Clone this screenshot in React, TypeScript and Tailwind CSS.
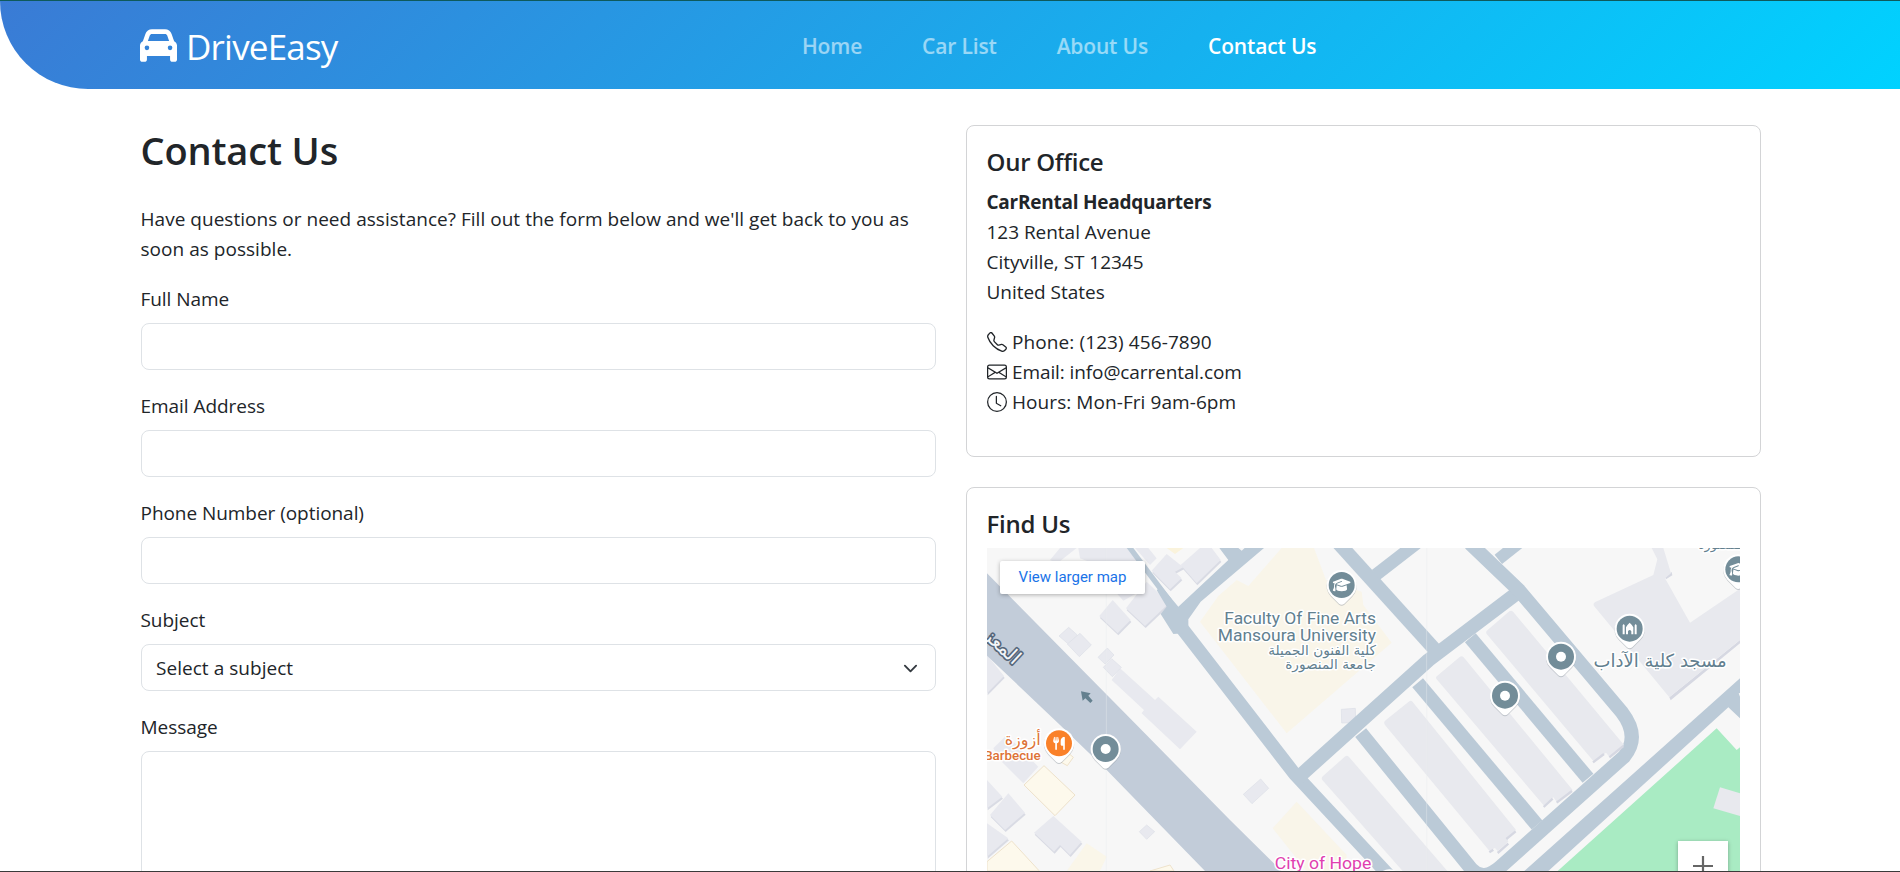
import type { ReactNode } from "react";
import { BsClock, BsEnvelope, BsTelephone } from "react-icons/bs";
import { FaCar, FaGraduationCap, FaUtensils } from "react-icons/fa6";

const inputClass =
  "block h-[47px] w-full rounded-[8px] border border-[#dee2e6] bg-white px-[14px] text-[19px] outline-none";

function Field({ label, children }: { label: string; children: ReactNode }) {
  return (
    <div className="mb-5">
      <label className="-ml-[0.5px] mb-[9px] block pt-px text-[19px] leading-[30px] tracking-[-0.05px] whitespace-nowrap">
        {label}
      </label>
      {children}
    </div>
  );
}

function Header() {
  const links = ["Home", "Car List", "About Us"];
  return (
    <header className="bg-white">
      <div className="h-px bg-[#0e5a5c]" />
      <div className="h-[88px] rounded-bl-[88px] bg-linear-[135deg,#3a7bd5,#00d2ff]">
        <div className="mx-auto flex h-full w-[1620px] items-center pt-[2px] text-white">
          <div className="flex w-[662px] items-center gap-[9px]">
            <FaCar className="mt-[-2px] size-[37px]" />
            <span className="text-[35px] leading-none tracking-[-0.8px]">DriveEasy</span>
          </div>
          <nav className="flex items-center gap-[60px] pt-[2px] text-[21px] font-semibold tracking-[-0.16px] whitespace-nowrap">
            {links.map((l) => (
              <a key={l} href="#" className="text-white/55">
                {l}
              </a>
            ))}
            <a href="#" className="text-white">
              Contact Us
            </a>
          </nav>
        </div>
      </div>
    </header>
  );
}

function Pin({ x, y, color = "#738d99", children }: { x: number; y: number; color?: string; children?: ReactNode }) {
  const body = "M0 -45A45 45 0 0 1 32 32L8 56Q0 62 -8 56L-32 32A45 45 0 0 1 0 -45Z";
  return (
    <g transform={`translate(${x} ${y})`}>
      <path d={body} transform="translate(0 3)" fill="#8a939b" opacity="0.45" />
      <path d={body} fill="#fff" />
      <circle r="39" fill={color} />
      {children ?? <circle r="15" fill="#fff" />}
    </g>
  );
}

function MapDrawing() {
  const building = { fill: "#e8e9ef", stroke: "#dddfe7", strokeWidth: 2 };
  return (
    <svg viewBox="51 204 2259 969" className="block h-[323px] w-[753px]" aria-hidden="true">
      <rect x="51" y="204" width="2259" height="969" fill="#f7f7f7" />

      {/* campus ground and parks */}
      <path d="M935 204H1032L1068 300L1175 335L1180 375L1265 488L950 760L690 425L745 348L800 300L835 318Z" fill="#f9f5e9" />
      <path d="M980 965L1130 1125V1173H1010L908 1045Z" fill="#f9f5e9" />
      <path d="M590 204H640L615 222Z" fill="#faf3dc" />
      <path d="M350 1090L410 1130L390 1173H290Z" fill="#faf6e9" />
      <path d="M2240 745L2300 810L2310 802V1173H1763Z" fill="#a9ebc3" />
      <path d="M2250 922L2310 940V1008L2230 985Z" fill="#e8e9ee" />

      {/* shaded building edges */}
      <g fill="#d9dbe4" transform="translate(2 6)">
        <path d="M590 222L640 262L615 275L635 295L600 328L545 272Z" />
        <path d="M690 204H725L752 240L680 310L632 255Z" />
        <path d="M530 305L597 370L525 438L468 385Z" />
        <path d="M428 360L482 420L443 460L388 408Z" />
        <path d="M51 525L102 588L51 640Z" />
        <path d="M250 1008L335 1085L300 1125L270 1095L252 1115L192 1058Z" />
        <path d="M115 940L165 998L105 1050L60 1005Z" />
        <path d="M51 900L97 950L51 985Z" />
        <path d="M51 1030L115 1075L51 1130Z" />
      </g>
      <g fill="#e8e9ef">
        <path d="M270 204H320L262 250L240 240Z" />
        <path d="M325 204H470L520 260L420 270L330 235Z" />
        <path d="M495 204H535L560 235L540 255Z" />
        <path d="M590 222L640 262L615 275L635 295L600 328L545 272Z" />
        <path d="M690 204H725L752 240L680 310L632 255Z" />
        <path d="M530 305L597 370L525 438L468 385Z" />
        <path d="M428 360L482 420L443 460L388 408Z" />
        <path d="M440 340H500L460 362Z" />
        <path d="M450 565L555 660L565 650L680 755L630 808L515 700L522 690L425 600Z" />
        <path d="M51 525L102 588L51 640Z" />
        <path d="M250 1008L335 1085L300 1125L270 1095L252 1115L192 1058Z" />
        <path d="M115 940L165 998L105 1050L60 1005Z" />
        <path d="M51 900L97 950L51 985Z" />
        <path d="M51 1030L115 1075L51 1130Z" />
        <path d="M110 765L205 860L160 910L90 840L70 805Z" />
      </g>
      <g {...building}>
        <path d="M296 442L322 465L295 492L267 468Z" />
        <path d="M330 460L364 495L328 530L292 492Z" />
        <path d="M412 504L432 525L405 552L384 532Z" />
        <path d="M425 536L454 562L427 590L400 562Z" />
        <path d="M872 897L896 925L846 971L820 943Z" />
        <path d="M530 1035L554 1055L530 1078L508 1055Z" />
        <path d="M1114 688L1156 685L1157 728L1115 729Z" />
      </g>
      <g fill="#fdf9ec" stroke="#eee2cb" strokeWidth="3">
        <path d="M222 857L315 945L255 1007L162 915Z" />
        <path d="M125 1083L208 1173H51V1145Z" />
        <path d="M290 815L310 832L292 857L272 846Z" />
        <path d="M540 1173L600 1155L612 1173Z" />
      </g>

      {/* mosque block */}
      <path d="M2098 652L2312 478V488L2102 661ZM2085 290L2105 276L2107 286L2088 298Z" fill="#d6d8e2" />
      <path d="M2045 204L2062 238L2050 285L1876 366Q1868 370 1872 378L2098 652L2312 478V325L2160 428L2085 295L2103 280L2080 204Z" fill="#e8e9ee" />

      {/* avenue */}
      <path d="M51 280L500 735L780 1020L935 1173H705L410 870L270 735L51 527Z" fill="#c2ccd9" />

      {/* streets */}
      <g fill="none" stroke="#bbcad7" strokeWidth="42" strokeLinejoin="round">
        <path d="M474 196L600 364" strokeWidth="16" />
        <path d="M632 440L974 882L1265 1195" strokeWidth="40" />
        <path d="M1106 190L1394 508" />
        <path d="M1217 285L1340 190" strokeWidth="38" />
        <path d="M985 892L1376 540L1640 340" />
        <path d="M1500 190L1648 332L1955 696Q2012 770 1962 830L1590 1162Q1540 1205 1505 1168L1172 758" />
        <path d="M1585 238L1648 188" strokeWidth="36" />
        <path d="M1501 473L1854 895" />
        <path d="M1343 608L1701 1035" />
      </g>
      <path d="M625 380L775 240L748 204H805L815 212L824 204H882L692 365L655 418V440L640 460L610 462L572 402L590 380L560 330L575 320Z" fill="#bbcad7" />
      <path d="M2310 595V715L2275 682L1735 1173H1663Z" fill="#bbcad7" />
      <path d="M2306 640L2312 638V655Z" fill="#f7f7f7" />

      {/* dormitory rows */}
      <g fill="#e8e9ee" transform="translate(1170 0)">
        <path d="M380 462Q376 456 382 451L448 394Q454 390 460 396L792 795L748 830L738 818L700 843Z" />
        <path d="M230 598Q225 592 232 587L300 530Q306 526 311 532L638 930L590 965L580 952L552 977Z" />
        <path d="M75 735Q69 727 77 721L148 664Q153 660 158 666L468 1050L440 1073L445 1085L413 1113L405 1104L388 1112Z" />
        <path d="M-113 900Q-118 893 -110 887L-44 829Q-39 825 -33 831L262 1173H128Z" />
      </g>
      <g fill="none" stroke="#d6d8e2" strokeWidth="7" transform="translate(1170 2)">
        <path d="M790 796L748 830M732 820L699 845" />
        <path d="M636 931L590 966M578 954L551 979" />
        <path d="M467 1052L439 1075M445 1089L413 1117M400 1107L388 1115" />
      </g>

      {/* tile seams */}
      <path d="M409 204V1173M1370 204V1173" stroke="#eceef0" strokeWidth="2" opacity="0.6" />

      {/* direction arrow */}
      <path d="M333 634L362 640L355 647L368 662L361 669L346 655L338 662Z" fill="#64808f" />

      {/* labels */}
      <g fontFamily="Roboto, sans-serif" fill="#62808f" stroke="#fff" strokeWidth="9" strokeLinejoin="round" paintOrder="stroke">
        <text x="1218" y="431" fontSize="50" textAnchor="end" textLength="455" lengthAdjust="spacingAndGlyphs">
          Faculty Of Fine Arts
        </text>
        <text x="1218" y="484" fontSize="50" textAnchor="end" textLength="475" lengthAdjust="spacingAndGlyphs">
          Mansoura University
        </text>
        <g fontFamily="'DejaVu Sans', sans-serif" direction="rtl">
          <text x="1218" y="526" fontSize="41" textAnchor="start">كلية الفنون الجميلة</text>
          <text x="1218" y="568" fontSize="41" textAnchor="start">جامعة المنصورة</text>
          <text x="2270" y="562" fontSize="54" textAnchor="start">مسجد كلية الآداب</text>
          <text x="2330" y="208" fontSize="38" textAnchor="start">المنصورة</text>
          <text x="212" y="795" fontSize="48" textAnchor="start" fill="#dd7236">أزوزة</text>
        </g>
        <text x="212" y="839" fontSize="40" fontWeight="500" textAnchor="end" fill="#dd7236">Barbecue</text>
        <text x="914" y="1167" fontSize="50" fill="#e040b0" textLength="290" lengthAdjust="spacingAndGlyphs">
          City of Hope
        </text>
      </g>
      <text
        transform="translate(130 556) rotate(43)"
        direction="rtl"
        fontFamily="'DejaVu Sans', sans-serif"
        fontSize="58"
        fill="#f4f6f8"
        stroke="#56677b"
        strokeWidth="10"
        strokeLinejoin="round"
        paintOrder="stroke"
      >
        المعز
      </text>

      {/* pins */}
      <Pin x={1115} y={315}>
        <FaGraduationCap x="-27" y="-27" size="54" color="#fff" />
      </Pin>
      <Pin x={267} y={790} color="#fa8129">
        <FaUtensils x="-20" y="-20" size="40" color="#fff" />
      </Pin>
      <Pin x={407} y={807} />
      <Pin x={1773} y={530} />
      <Pin x={1605} y={647} />
      <Pin x={1979} y={446}>
        <path d="M-21 17V-10L-18 -14L-15 -10V17ZM21 17V-10L18 -14L15 -10V17ZM-11 17V-4Q-9 -10 0 -18Q9 -10 11 -4V17H5V8Q0 0 -5 8V17Z" fill="#fff" />
      </Pin>
      <Pin x={2305} y={268}>
        <FaGraduationCap x="-27" y="-27" size="54" color="#fff" />
      </Pin>
      <circle cx="1258" cy="1208" r="36" fill="#e040b0" stroke="#fff" strokeWidth="8" />
    </svg>
  );
}

function ContactForm() {
  return (
    <section className="w-[795px]">
      <h1 className="mb-[29px] -ml-[0.5px] pt-px text-[38px] leading-[48px] font-semibold tracking-[-0.15px]">Contact Us</h1>
      <p className="mb-[19px] -ml-[0.5px] pt-px text-[19px] leading-[30px] tracking-[0.03px] whitespace-nowrap">
        Have questions or need assistance? Fill out the form below and we'll get back to you as
        <br />
        soon as possible.
      </p>
      <Field label="Full Name">
        <input className={inputClass} />
      </Field>
      <Field label="Email Address">
        <input className={inputClass} />
      </Field>
      <Field label="Phone Number (optional)">
        <input className={inputClass} />
      </Field>
      <Field label="Subject">
        <button className="flex h-[47px] w-full items-center justify-between rounded-[8px] border border-[#dee2e6] bg-white pt-px pr-[17px] pl-[14px] text-left text-[19px] tracking-[0.04px]">
          Select a subject
          <svg viewBox="0 0 16 16" className="size-[15px]" fill="none" stroke="#343a40" strokeWidth="2" strokeLinecap="round" strokeLinejoin="round">
            <path d="m2 5 6 6 6-6" />
          </svg>
        </button>
      </Field>
      <Field label="Message">
        <textarea className="block h-[167px] w-full resize-none rounded-[8px] border border-[#dee2e6] bg-white" />
      </Field>
    </section>
  );
}

function Card({ title, children }: { title: string; children: ReactNode }) {
  return (
    <div className="rounded-[8px] border border-[#d3d4d6] bg-white p-5">
      <h2 className="mb-[9px] -ml-[0.5px] pt-px text-[24px] leading-[30px] font-semibold tracking-[-0.25px]">{title}</h2>
      {children}
    </div>
  );
}

function ContactLine({ icon, children }: { icon: ReactNode; children: ReactNode }) {
  return (
    <div className="flex items-center gap-[5px]">
      {icon}
      {children}
    </div>
  );
}

export default function App() {
  return (
    <div className="relative h-[872px] w-[1900px] overflow-hidden bg-white font-['Open_Sans','Noto_Sans',sans-serif] text-[#212529]">
      <Header />
      <main className="ml-[141px] flex w-[1620px] gap-[30px] pt-9">
        <ContactForm />
        <aside className="flex w-[795px] flex-col gap-[30px]">
          <Card title="Our Office">
            <address className="mb-5 -ml-[0.5px] text-[19px] leading-[30px] tracking-[-0.03px] not-italic pt-px">
              <strong className="font-bold tracking-[-0.25px]">CarRental Headquarters</strong>
              <br />
              123 Rental Avenue
              <br />
              Cityville, ST 12345
              <br />
              United States
            </address>
            <div className="mb-[19px] text-[19px] leading-[30px]">
              <ContactLine icon={<BsTelephone className="size-5" />}>
                <span className="tracking-[0.1px]">Phone: (123) 456-7890</span>
              </ContactLine>
              <ContactLine icon={<BsEnvelope className="size-5" />}>
                <span className="tracking-[-0.1px]">Email: info@carrental.com</span>
              </ContactLine>
              <ContactLine icon={<BsClock className="size-5" />}>
                <span className="tracking-[0.07px]">Hours: Mon-Fri 9am-6pm</span>
              </ContactLine>
            </div>
          </Card>
          <Card title="Find Us">
            <div className="relative h-[500px] w-[753px] overflow-hidden bg-[#f7f7f7]">
              <MapDrawing />
              <a
                href="#"
                className="absolute top-[13px] left-[13px] flex h-[33px] w-[145px] items-center justify-center rounded-[2px] bg-white font-[Roboto,sans-serif] text-[15px] whitespace-nowrap text-[#1a73e8] shadow-[0_1px_4px_rgba(0,0,0,0.3)]"
              >
                View larger map
              </a>
              <button className="absolute top-[293px] left-[691px] flex size-[50px] items-center justify-center bg-white shadow-[0_1px_4px_rgba(0,0,0,0.3)]">
                <svg viewBox="0 0 20 20" className="size-5" fill="none" stroke="#666" strokeWidth="2.2">
                  <path d="M10 0v20M0 10h20" />
                </svg>
              </button>
            </div>
          </Card>
        </aside>
      </main>
      <div className="absolute inset-x-0 bottom-0 h-px bg-[#3a3a3a]" />
    </div>
  );
}
